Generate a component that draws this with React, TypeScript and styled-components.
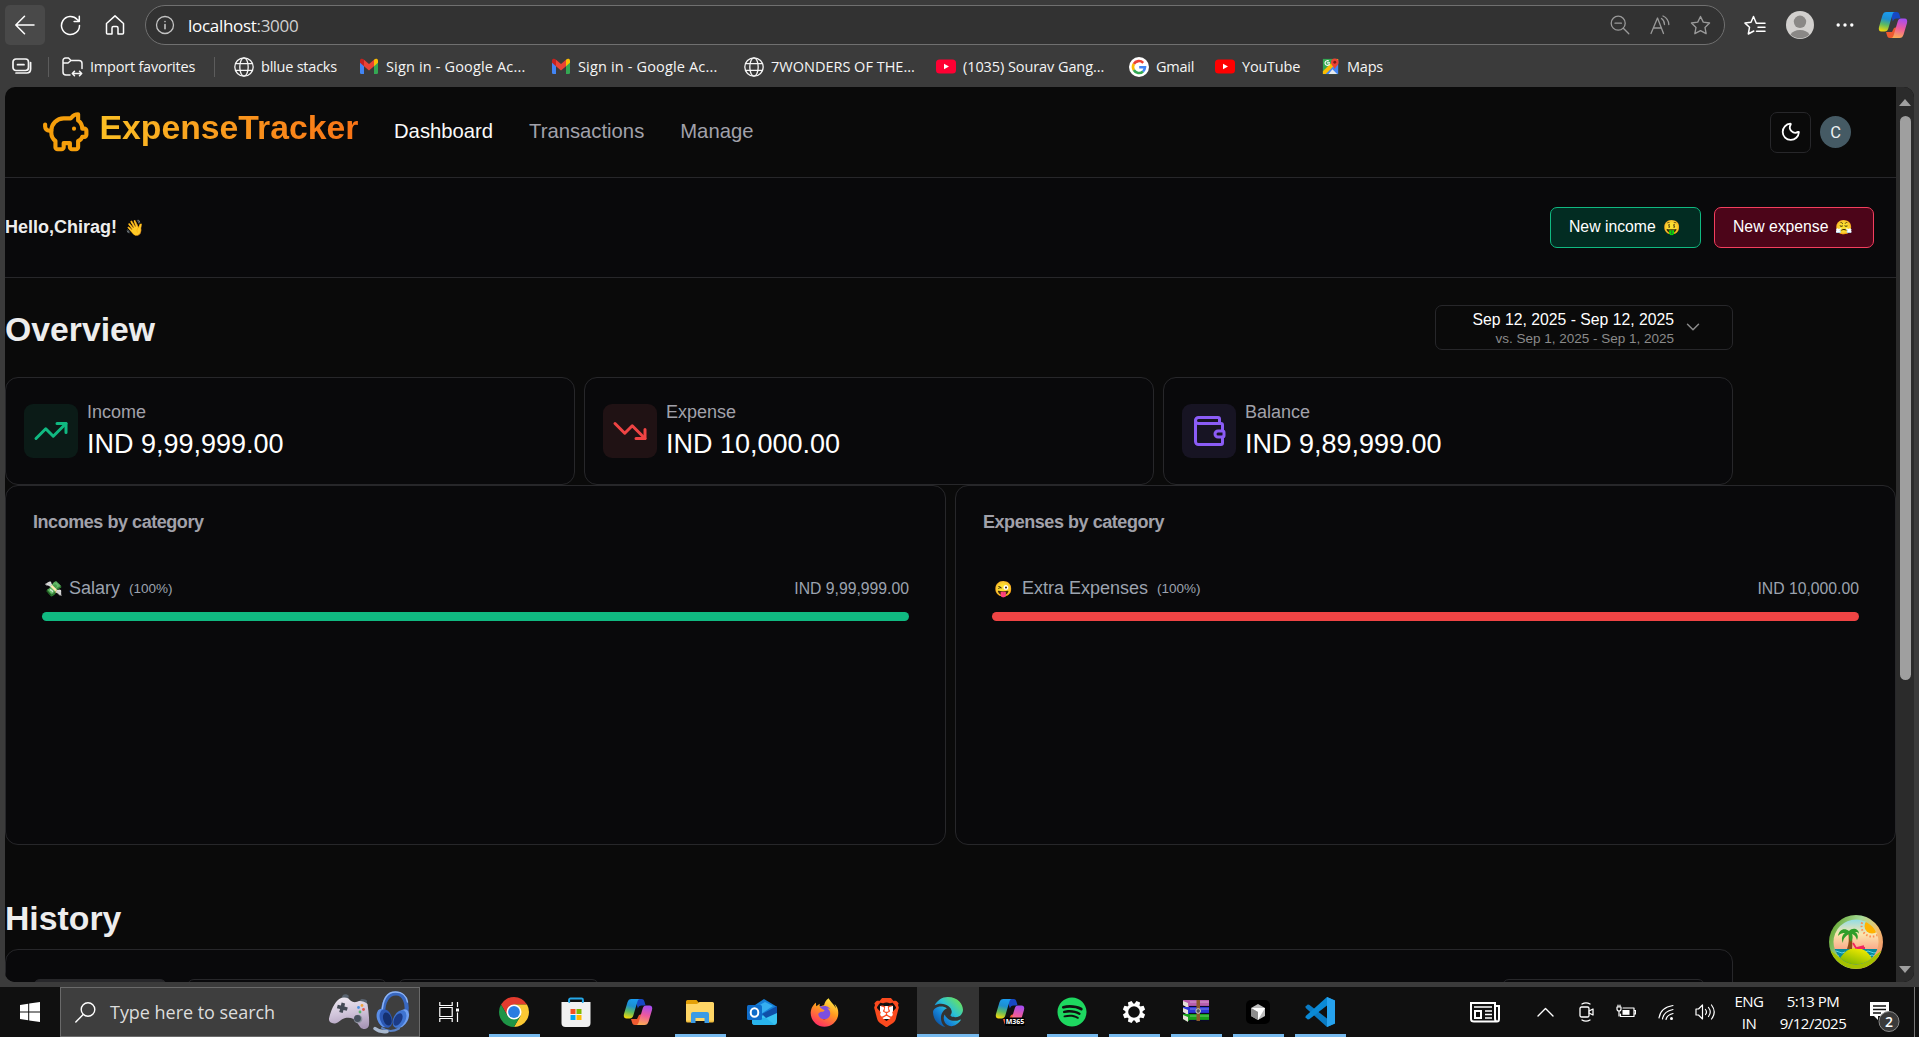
import React from "react";
import styled, { createGlobalStyle, css } from "styled-components";
import { ChevronDown, Moon, PiggyBank, TrendingDown, TrendingUp, Wallet } from "lucide-react";
import { FaBrave, FaEdge, FaFirefoxBrowser, FaSpotify } from "react-icons/fa6";

const GlobalStyle = createGlobalStyle`
  * { box-sizing: border-box; }
  body { margin: 0; background: #3b3b3b; overflow: hidden; }
  svg { display: block; flex: none; }
`;

const uiFont = css`font-family: "Open Sans", "Noto Sans", sans-serif;`;

const Screen = styled.div`
  width: 1919px;
  height: 1037px;
  display: flex;
  flex-direction: column;
  background: #3b3b3b;
  overflow: hidden;
`;

/* ---------- browser chrome ---------- */

const Toolbar = styled.div`
  ${uiFont}
  height: 50px;
  flex: none;
  display: flex;
  align-items: center;
  padding-left: 5px;
  color: #fff;
`;

const BackButton = styled.div`
  width: 40px;
  height: 40px;
  flex: none;
  border-radius: 5px;
  background: #494949;
  display: grid;
  place-items: center;
`;

const ToolSlot = styled.div<{ $w: number }>`
  width: ${(p) => p.$w}px;
  height: 40px;
  flex: none;
  display: grid;
  place-items: center;
`;

const AddressBar = styled.div`
  width: 1580px;
  height: 40px;
  margin-left: 7px;
  flex: none;
  border: 1px solid #707070;
  border-radius: 20px;
  background: #323232;
  display: flex;
  align-items: center;
  padding: 0 3px 0 9px;
`;

const Url = styled.div`
  flex: 1;
  margin-left: 13px;
  font-size: 17px;
  letter-spacing: -0.3px;
  color: #fff;
  span { color: #d0d0d0; }
`;

const BookmarksBar = styled.div`
  ${uiFont}
  height: 37px;
  flex: none;
  display: flex;
  align-items: center;
  padding: 0 0 4px 12px;
  color: #f5f5f5;
  font-size: 14.5px;
`;

const Bookmark = styled.div<{ $w: number; $tracking?: number }>`
  width: ${(p) => p.$w}px;
  letter-spacing: ${(p) => p.$tracking ?? -0.22}px;
  flex: none;
  display: flex;
  align-items: center;
  gap: 7px;
  white-space: nowrap;
`;

const Divider = styled.div<{ $gap: number }>`
  width: 1px;
  height: 20px;
  background: #5c5c5c;
  margin-right: ${(p) => p.$gap}px;
`;

/* ---------- page ---------- */

const Viewport = styled.div`
  width: 1909px;
  height: 895px;
  flex: none;
  margin-left: 5px;
  display: flex;
  border-radius: 10px;
  overflow: hidden;
  background: #0a0a0a;
  font-family: "Liberation Sans", Arial, sans-serif;
`;

const Page = styled.main`
  width: 1891px;
  height: 895px;
  overflow: hidden;
  position: relative;
  color: #ededed;
`;

const ScrollTrack = styled.div`
  width: 18px;
  background: #2b2b2b;
  display: flex;
  flex-direction: column;
  align-items: center;
  padding-top: 12px;
`;

const ScrollThumb = styled.div`
  width: 11px;
  height: 564px;
  margin: 10px 0 286px;
  border-radius: 6px;
  background: #9f9f9f;
`;

const ScrollArrow = styled.div<{ $down?: boolean }>`
  border: 6.5px solid transparent;
  border-top-width: ${(p) => (p.$down ? 7 : 0)}px;
  border-bottom-width: ${(p) => (p.$down ? 0 : 7)}px;
  border-top-color: ${(p) => (p.$down ? "#9f9f9f" : "transparent")};
  border-bottom-color: ${(p) => (p.$down ? "transparent" : "#9f9f9f")};
`;

const Header = styled.header`
  height: 91px;
  border-bottom: 1px solid #27272a;
  display: flex;
  align-items: center;
  padding: 0 45px 0 36px;
`;

const Logo = styled.div`
  width: 353px;
  display: flex;
  align-items: center;
  gap: 9px;
  color: #f59e0b;
  padding-top: 2px;
`;

const Brand = styled.span`
  font-size: 33.75px;
  line-height: 1.2;
  font-weight: 700;
  margin-bottom: 11px;
  background: linear-gradient(90deg, #fbbf24, #f97316);
  -webkit-background-clip: text;
  background-clip: text;
  color: transparent;
`;

const Nav = styled.nav`
  flex: 1;
  display: flex;
  gap: 36px;
  padding-bottom: 2px;
  font-size: 20.25px;
`;

const NavLink = styled.a<{ $active?: boolean }>`
  color: ${(p) => (p.$active ? "#fafafa" : "#a1a1aa")};
`;

const IconButton = styled.button`
  width: 41px;
  height: 41px;
  padding: 0;
  border: 1px solid #27272a;
  border-radius: 7px;
  background: #0a0a0a;
  color: #fff;
  display: grid;
  place-items: center;
`;

const Avatar = styled.div`
  width: 31px;
  height: 32px;
  margin-left: 9px;
  border-radius: 50%;
  background: #455a64;
  color: #eceff1;
  font: 16.5px Roboto, sans-serif;
  display: grid;
  place-items: center;
`;

const Greeting = styled.section`
  height: 100px;
  border-bottom: 1px solid #27272a;
  background: #09090b;
  display: flex;
  align-items: center;
  justify-content: space-between;
  padding-right: 22px;
`;

const Hello = styled.p`
  margin: 0;
  font-size: 18px;
  font-weight: 700;
  display: flex;
  align-items: center;
  gap: 8px;
  span { font-size: 15.5px; }
`;

const Actions = styled.div`
  display: flex;
  gap: 13px;
`;

const ActionButton = styled.button<{ $w: number; $border: string; $bg: string }>`
  width: ${(p) => p.$w}px;
  height: 41px;
  padding: 0 0 2px 18px;
  border: 1px solid ${(p) => p.$border};
  border-radius: 7px;
  background: ${(p) => p.$bg};
  color: #fff;
  font: 15.75px "Liberation Sans", Arial, sans-serif;
  display: flex;
  align-items: center;
  gap: 7px;
  span { font-size: 14px; }
`;

const SectionHead = styled.div`
  width: 1728px;
  height: 99px;
  padding-top: 3px;
  display: flex;
  align-items: center;
  justify-content: space-between;
`;

const Title = styled.h2`
  margin: 0;
  font-size: 33.75px;
  line-height: 40px;
  font-weight: 700;
`;

const DatePicker = styled.div`
  width: 298px;
  height: 45px;
  margin-bottom: 4px;
  border: 1px solid #27272a;
  border-radius: 7px;
  display: flex;
  align-items: center;
  justify-content: flex-end;
  gap: 8px;
  padding-right: 28px;
  color: #8b8b8b;
`;

const DateLines = styled.div`
  display: flex;
  flex-direction: column;
  align-items: flex-end;
  padding-top: 4px;
  font-size: 13.5px;
  line-height: 18px;
  strong {
    font-weight: 400;
    font-size: 15.75px;
    line-height: 20px;
    color: #fff;
  }
`;

const StatGrid = styled.div`
  width: 1728px;
  display: grid;
  grid-template-columns: repeat(3, 1fr);
  gap: 9px;
`;

const Panel = styled.div`
  border: 1px solid #27272a;
  border-radius: 13px;
  background: #09090b;
`;

const StatCard = styled(Panel)`
  height: 108px;
  padding-left: 18px;
  display: flex;
  align-items: center;
  gap: 9px;
`;

const StatIcon = styled.div<{ $color: string; $bg: string }>`
  width: 54px;
  height: 54px;
  border-radius: 9px;
  display: grid;
  place-items: center;
  color: ${(p) => p.$color};
  background: ${(p) => p.$bg};
`;

const StatText = styled.div`
  color: #a1a1aa;
  font-size: 18px;
  line-height: 27px;
  padding-bottom: 2px;
  strong {
    display: block;
    font-weight: 400;
    font-size: 27px;
    line-height: 36px;
    color: #fff;
  }
`;

const CategoryGrid = styled.div`
  display: grid;
  grid-template-columns: 1fr 1fr;
  gap: 9px;
`;

const CategoryCard = styled(Panel)`
  height: 360px;
  padding: 27px 36px 0 27px;
`;

const CategoryTitle = styled.h3`
  margin: 0;
  font-size: 18px;
  line-height: 18px;
  font-weight: 700;
  letter-spacing: -0.45px;
  color: #a1a1aa;
`;

const CategoryRow = styled.div`
  margin: 44px 0 0 9px;
  height: 27px;
  display: flex;
  align-items: center;
  color: #9ca3af;
  font-size: 18px;
  small { font-size: 13.5px; margin-left: 9px; }
`;

const RowEmoji = styled.span<{ $w: number }>`
  width: ${(p) => p.$w}px;
  flex: none;
  padding-left: 2px;
  font-size: 15px;
`;

const Amount = styled.span`
  margin-left: auto;
  font-size: 15.75px;
`;

const Bar = styled.div<{ $color: string }>`
  height: 9px;
  margin: 10px 0 0 9px;
  border-radius: 5px;
  background: ${(p) => p.$color};
`;

const HistoryTitle = styled(Title)`
  margin-top: 53px;
`;

const HistoryCard = styled(Panel)`
  width: 1728px;
  height: 200px;
  margin-top: 11px;
  padding: 29px 27px 0;
  display: flex;
`;

const HistoryControl = styled.div<{ $w: number; $ml: number; $filled?: boolean }>`
  width: ${(p) => p.$w}px;
  height: 40px;
  flex: none;
  margin-left: ${(p) => p.$ml}px;
  border: 1px solid #27272a;
  border-radius: 7px;
  background: ${(p) => (p.$filled ? "#27272a" : "transparent")};
`;

const DevBadge = styled.div`
  position: absolute;
  right: 13px;
  bottom: 13px;
`;

/* ---------- taskbar ---------- */

const Taskbar = styled.footer`
  ${uiFont}
  height: 50px;
  margin-top: 5px;
  flex: none;
  display: flex;
  background: #101010;
  color: #fff;
`;

const StartButton = styled.div`
  width: 60px;
  display: grid;
  place-items: center;
`;

const SearchBox = styled.div`
  width: 360px;
  border: 1px solid #6a6a6a;
  background: #3e3e3e;
  display: flex;
  align-items: center;
  gap: 3px;
  padding: 0 8px 0 14px;
  color: #dcdcdc;
  font-size: 18px;
  letter-spacing: -0.03px;
`;

const SearchLabel = styled.span`
  flex: 1;
  margin-left: 11px;
  white-space: nowrap;
`;

const TaskView = styled.div`
  width: 63px;
  padding-right: 5px;
  display: grid;
  place-items: center;
`;

const AppSlot = styled.div<{ $open?: boolean; $active?: boolean }>`
  width: 62px;
  display: grid;
  grid-template-rows: 47px 3px;
  place-items: center;
  background: ${(p) => (p.$active ? "#333" : "transparent")};
  > * { margin-top: 3px; }
  &::after {
    content: "";
    width: ${(p) => (p.$active ? 62 : 51)}px;
    height: 3px;
    background: ${(p) => (p.$open ? "#76b9ed" : "transparent")};
  }
`;

const BrandStack = styled.div<{ $core: string; $inset: string }>`
  display: grid;
  place-items: center;
  background: ${(p) => p.$core} no-repeat;
  background-clip: content-box;
  padding: ${(p) => p.$inset};
  > svg { margin: -8px; }
`;

const Tray = styled.div`
  margin-left: auto;
  display: flex;
  align-items: center;
`;

const TrayLines = styled.div<{ $w: number }>`
  width: ${(p) => p.$w}px;
  text-align: center;
  font-size: 15px;
  line-height: 22px;
  letter-spacing: -0.5px;
  white-space: nowrap;
`;

const Notifications = styled.div`
  width: 61px;
  height: 50px;
  padding: 13px 0 0 15px;
  border-right: 1px solid #777;
  margin-right: 4px;
`;

/* ---------- drawings ---------- */

const line = { fill: "none", stroke: "currentColor", strokeLinecap: "round", strokeLinejoin: "round" } as const;

const Globe = () => (
  <svg width="20" height="20" viewBox="0 0 20 20" {...line} strokeWidth="1.3">
    <circle cx="10" cy="10" r="9.2" />
    <ellipse cx="10" cy="10" rx="4.2" ry="9.2" />
    <path d="M1.6 6.7h16.8M1.6 13.3h16.8" />
  </svg>
);

const GmailIcon = () => (
  <svg width="20" height="17" viewBox="0 0 20 15" preserveAspectRatio="none">
    <path d="M1 2.2V13a1.2 1.2 0 0 0 1.2 1.2H5V6z" fill="#4285f4" />
    <path d="M15 6v8.2h2.8A1.2 1.2 0 0 0 19 13V2.2z" fill="#34a853" />
    <path d="M5 1.5v5.8l5 3.8 5-3.8V1.5l-5 3.9z" fill="#ea4335" />
    <path d="M1 2.5V4.3l4 3V1.5C3.5.3 1 .5 1 2.500z" fill="#c5221f" />
    <path d="M19 2.500V4.300l-4 3V1.500C16.500.3 19 .5 19 2.500z" fill="#fbbc04" />
  </svg>
);

const YouTubeIcon = ({ color }: { color: string }) => (
  <svg width="20" height="15" viewBox="0 0 20 15">
    <rect y=".5" width="20" height="14" rx="3.5" fill={color} />
    <path d="M8 4.700v5.600l5-2.800z" fill="#fff" />
  </svg>
);

const GoogleIcon = () => (
  <svg width="20" height="20" viewBox="0 0 20 20" fill="none" strokeWidth="2.6">
    <circle cx="10" cy="10" r="10" fill="#fff" />
    <path d="M14.200 5.800A6 6 0 0 0 4.800 7" stroke="#ea4335" />
    <path d="M4.800 7a6 6 0 0 0 0 6" stroke="#fbbc05" />
    <path d="M4.800 13a6 6 0 0 0 9.200 1.500" stroke="#34a853" />
    <path d="M14 14.500A6 6 0 0 0 16 10.300h-5.800" stroke="#4285f4" />
  </svg>
);

const MapsIcon = () => (
  <svg width="19" height="19" viewBox="0 0 20 20">
    <path d="M2 2h16v16H2z" fill="#34a853" />
    <path d="M2 18L18 2v16z" fill="#4285f4" />
    <path d="M2 15L15 2h3v3L5 18H2z" fill="#fbbc04" />
    <path d="M8 18l4-5 5 5z" fill="#e8eaed" />
    <path d="M14.500 13c-.5-3-4-4-4-7.500a4 4 0 0 1 8 0c0 3.500-3.500 4.500-4 7.500z" fill="#ea4335" />
    <circle cx="14.500" cy="5.500" r="1.500" fill="#7b1a12" />
    <path d="M9.500 6.200H6.200M9 7.500a2.500 2.500 0 1 1-.8-3.200" fill="none" stroke="#fff" strokeWidth="1.200" />
  </svg>
);

const Copilot = ({ id, label }: { id: string; label?: boolean }) => (
  <svg width="30" height="30" viewBox="0 0 30 30">
    <defs>
      <linearGradient id={id + "a"} x1=".5" y1="0" x2=".3" y2="1">
        <stop offset="0" stopColor="#1a9cf0" />
        <stop offset=".35" stopColor="#1e8fd0" />
        <stop offset=".65" stopColor="#5cba62" />
        <stop offset="1" stopColor="#f5d90a" />
      </linearGradient>
      <linearGradient id={id + "b"} x1=".6" y1="0" x2=".4" y2="1">
        <stop offset="0" stopColor="#a64cf0" />
        <stop offset=".5" stopColor="#ee5a9c" />
        <stop offset="1" stopColor="#fbac55" />
      </linearGradient>
    </defs>
    <path d="M12 2h6.500c2 0 2.600 1 3.100 3l1 3.500h-4.100c-2 0-3 1-3.600 3z" fill="#1748c4" />
    <path d="M8 22h6l2-4 3-1-3 11h-4c-2 0-2.600-1-3.100-3z" fill="#ee5a30" />
    <path d="M8.500 2H17c-1.500 0-2.200 1.300-2.700 3l-4 13.500c-.6 2-1.600 3-3.600 3H3.500C1 21.500.4 19.500 1 17L4.400 5.500C5.200 3 6.300 2 8.500 2z" fill={`url(#${id}a)`} />
    <path d="M21.500 28H13c1.500 0 2.200-1.300 2.700-3l4-13.500c.6-2 1.600-3 3.600-3h3.200c2.500 0 3.100 2 2.500 4.500l-3.400 11.500c-.8 2.500-1.900 3.500-4.100 3.500z" fill={`url(#${id}b)`} />
    {label && <rect x="10" y="20.500" width="20" height="8.500" rx="1" fill="#000" />}
    {label && <text x="20" y="27.300" textAnchor="middle" fontFamily="Open Sans" fontWeight="700" fontSize="7" fill="#fff">M365</text>}
  </svg>
);

const Gamepad = () => (
  <svg width="42" height="38" viewBox="0 0 42 38">
    <defs>
      <linearGradient id="pad" x1=".4" y1="0" x2=".6" y2="1">
        <stop offset="0" stopColor="#ece6f0" />
        <stop offset=".5" stopColor="#cfc3d9" />
        <stop offset="1" stopColor="#a896b6" />
      </linearGradient>
    </defs>
    <path d="M13 5.500l2-3.500c1.500-1.200 5-.6 5.800 1L20 6zM30 9l3-2.800c2-.6 5 .2 6 1.600L39 12z" fill="#5a6470" />
    <path d="M12 5.500c3-1.500 6-1 8.500 0 1.500 2 3 3 5 3.500s4-.5 6-1c3 0 6 1 8 3 1 7 2 15 1.500 21-.5 4.500-6 5-8.500 2.500-2.500-3-4-7-7-8.500-3-1.500-6-1.200-9-.8-3.500 1-5.500 4.300-8.500 5-4.500.8-7.500-1.200-7-4.700C2.500 19 6 9 12 5.500z" fill="url(#pad)" />
    <path d="M13.600 9.500l3.500 1-.7 3 3.400.9-1 3.400-3.300-.9-.8 3.200-3.500-1 .9-3.100-3.200-.8.900-3.400 3.100.8z" fill="#434a55" />
    <circle cx="30" cy="26" r="4.300" fill="#8e93a0" />
    <circle cx="29.500" cy="25.500" r="3.400" fill="#48505d" />
    <circle cx="34" cy="12.500" r="1.400" fill="#f2a33c" />
    <circle cx="35.500" cy="16.500" r="1.400" fill="#e0574f" />
    <circle cx="32" cy="19" r="1.400" fill="#58b368" />
    <circle cx="30.500" cy="14.500" r="1.400" fill="#4a90e2" />
  </svg>
);

const Headphones = () => (
  <svg width="38" height="44" viewBox="0 0 38 44" fill="none" strokeLinecap="round">
    <path d="M10 24C10 11 15 3.500 23 3.500S36 13 32.500 26" stroke="#3968c0" strokeWidth="4.200" />
    <path d="M9 23C9.500 10 14 2 22.500 2 29 2 33.500 6 34.500 12" stroke="#8db4f5" strokeWidth="1.500" />
    <ellipse cx="10" cy="28" rx="6" ry="9.500" transform="rotate(-18 10 28)" fill="#5b8fe8" />
    <ellipse cx="13" cy="28.500" rx="6" ry="9.500" transform="rotate(-18 13 28.500)" fill="#2c58b4" />
    <ellipse cx="14.300" cy="29" rx="4" ry="6.800" transform="rotate(-18 14.300 29)" fill="#15306f" />
    <ellipse cx="29" cy="28.500" rx="6" ry="10" transform="rotate(28 29 28.500)" fill="#6f9ff0" />
    <ellipse cx="26.500" cy="29" rx="6" ry="9.500" transform="rotate(28 26.500 29)" fill="#3f74d1" />
    <ellipse cx="25" cy="29.500" rx="3.800" ry="6.800" transform="rotate(28 25 29.500)" fill="#1c3b86" />
    <path d="M9 38c5 3.500 11 3.800 17 .5" stroke="#5b83c8" strokeWidth="2" />
    <path d="M2 38.500c3.500 3 8 3.500 12 3" stroke="#a9b9cf" strokeWidth="3.400" />
  </svg>
);

const ChromeIcon = () => (
  <svg width="30" height="30" viewBox="0 0 30 30">
    <path d="M2.010 7.500A15 15 0 0 1 27.990 7.500H15L8.500 18.750z" fill="#e33b2e" />
    <path d="M27.990 7.500A15 15 0 0 1 15 30L21.500 18.750 15 7.500z" fill="#fcc934" />
    <path d="M15 30A15 15 0 0 1 2.010 7.500L8.500 18.750H21.500z" fill="#1e9446" />
    <circle cx="15" cy="15" r="7.500" fill="#fff" />
    <circle cx="15" cy="15" r="5.900" fill="#2a7de1" />
  </svg>
);

const StoreIcon = () => (
  <svg width="30" height="30" viewBox="0 0 30 30">
    <path d="M8 7V3a1.500 1.500 0 0 1 1.500-1.500h11A1.500 1.500 0 0 1 22 3v4" fill="none" stroke="#25a8e8" strokeWidth="1.800" />
    <path d="M.5 5h29v21a4 4 0 0 1-4 4h-21a4 4 0 0 1-4-4z" fill="#f1f1f1" />
    <path d="M7.500 3.500v2.500h1.600V3.500zM20.900 3.500v2.500h1.600V3.500z" fill="#25a8e8" />
    <path d="M9.500 12h5v5h-5z" fill="#f25022" />
    <path d="M15.500 12h5v5h-5z" fill="#7fba00" />
    <path d="M9.500 18h5v5h-5z" fill="#00a4ef" />
    <path d="M15.500 18h5v5h-5z" fill="#ffb900" />
  </svg>
);

const ExplorerIcon = () => (
  <svg width="28" height="26" viewBox="0 0 28 26">
    <path d="M0 2.500A1.500 1.500 0 0 1 1.500 1h9l3 3.500H28V12H0z" fill="#e3a008" />
    <path d="M0 5h11l2.500-2H26.500A1.500 1.500 0 0 1 28 4.500V22H0z" fill="#ffd666" />
    <path d="M5 24V15a2 2 0 0 1 2-2h14a2 2 0 0 1 2 2v9h-4.500v-5h-9v5z" fill="#3b9be6" />
    <path d="M0 21.500h5v2H1.500A1.500 1.500 0 0 1 0 22zM23 21.500h5v.5a1.500 1.500 0 0 1-1.500 1.500H23z" fill="#f3bf3f" />
  </svg>
);

const OutlookIcon = () => (
  <svg width="30" height="28" viewBox="0 0 30 28">
    <path d="M5 9L17 1l12.500 7.500V14L10 22 5 18z" fill="#1680d8" />
    <path d="M8 10L18 4l8 4-12 8z" fill="#35aef0" />
    <path d="M30 9v15a3 3 0 0 1-3 3H8a3 3 0 0 1-3-3z" fill="#39c3f2" />
    <path d="M15 16L30 8v7l-11 5z" fill="#0f4fa8" />
    <path d="M5 20l14 0 9 7H8a3 3 0 0 1-3-3z" fill="#28b4ec" />
    <rect y="7" width="15" height="15" rx="1.500" fill="#0f6cc9" />
    <ellipse cx="7.500" cy="14.500" rx="3.800" ry="4.300" fill="none" stroke="#fff" strokeWidth="2" />
  </svg>
);

const Gradients = () => (
  <svg width="0" height="0">
    <defs>
      <linearGradient id="edge" x1="1" y1=".2" x2=".2" y2="1">
        <stop offset="0" stopColor="#6be25a" />
        <stop offset=".4" stopColor="#2cc3d5" />
        <stop offset=".7" stopColor="#1583d8" />
        <stop offset="1" stopColor="#0c52a0" />
      </linearGradient>
      <linearGradient id="fox" x1=".8" y1="0" x2=".3" y2="1">
        <stop offset="0" stopColor="#fff04a" />
        <stop offset=".45" stopColor="#ff9a1f" />
        <stop offset="1" stopColor="#ff2a66" />
      </linearGradient>
    </defs>
  </svg>
);

const SettingsIcon = () => (
  <svg width="24" height="24" viewBox="-12 -12 24 24">
    <circle r="7.200" fill="none" stroke="#fff" strokeWidth="2.800" />
    {[0, 45, 90, 135, 180, 225, 270, 315].map((a) => (
      <path key={a} d="M-2-11.200h4l.6 3.400h-5.200z" fill="#fff" transform={`rotate(${a + 22.5})`} />
    ))}
  </svg>
);

const WinrarIcon = () => (
  <svg width="28" height="28" viewBox="0 0 28 28">
    {[["#b85fae", 2], ["#2b35d8", 9], ["#16a01a", 16]].map(([c, y]) => (
      <g key={c as string} transform={`translate(0 ${y})`}>
        <path d="M1 0h26v7H5L1 5z" fill={c as string} />
        <path d="M1 1l5 2v5L1 5z" fill="#e5e0d8" />
        <path d="M7 6.500h20" stroke="#0a0a2a" strokeWidth="1.200" />
        <path d="M8 2h19" stroke="#ffffff66" strokeWidth="1" />
      </g>
    ))}
    <path d="M14.500 2h3.500v21h-3.500z" fill="#8b5a2b" />
    <circle cx="16.200" cy="13" r="2.300" fill="#555" stroke="#ccc" />
  </svg>
);

const CursorIcon = () => (
  <svg width="26" height="26" viewBox="0 0 26 26">
    <rect x="1" y="1" width="24" height="24" rx="5" fill="#000" />
    <path d="M13 5l7 4v8l-7 4-7-4V9z" fill="#bdbdbd" />
    <path d="M6 9l14 0-7 12v-8z" fill="#fff" />
    <path d="M6 9l7 4v8l-7-4z" fill="#8d8d8d" />
  </svg>
);

const VsCodeIcon = () => (
  <svg width="30" height="30" viewBox="0 0 30 30">
    <path d="M22 0l8 3.500v23L22 30 1 11.200.2 9.800 2.800 7.600 4.200 7.700 22 21.500z" fill="#0a7bc4" />
    <path d="M22 0v8.500L4.200 22.300l-1.400.1L.2 20.200 1 18.800z" fill="#0a8ad6" />
    <path d="M22 0l8 3.500v23L22 30z" fill="#26a2ee" />
  </svg>
);

const NewsIcon = () => (
  <svg width="30" height="21" viewBox="0 0 30 21" fill="none" stroke="#fff">
    <path d="M1 1h24v15c0 2.500 1 3.500 2 3.500H4C2 19.500 1 18.500 1 17zM25 4h4v13c0 2-1 2.500-2 2.500" strokeWidth="2" />
    <path d="M4 5h18M15 9h7M15 12.500h7M15 16h7" strokeWidth="1.600" />
    <path d="M5 9h6v7H5z" strokeWidth="2" />
  </svg>
);

const IslandBadge = () => (
  <svg width="54" height="54" viewBox="0 0 54 54">
    <defs>
      <linearGradient id="ring" x1=".1" y1=".2" x2="1" y2=".6">
        <stop offset="0" stopColor="#6fae3f" />
        <stop offset=".4" stopColor="#a6dc9a" />
        <stop offset=".75" stopColor="#f2c36e" />
        <stop offset="1" stopColor="#f29a6e" />
      </linearGradient>
      <linearGradient id="sky" x1="0" y1="0" x2="0" y2="1">
        <stop offset="0" stopColor="#71d9f5" />
        <stop offset=".35" stopColor="#fbe6ae" />
        <stop offset=".7" stopColor="#fb9d83" />
      </linearGradient>
      <linearGradient id="hill" x1=".8" y1="0" x2=".2" y2="1">
        <stop offset="0" stopColor="#fff000" />
        <stop offset="1" stopColor="#5fa800" />
      </linearGradient>
      <clipPath id="disc"><circle cx="27" cy="27" r="22.500" /></clipPath>
    </defs>
    <circle cx="27" cy="27" r="27" fill="url(#ring)" />
    <path d="M1.500 35.500a27 27 0 0 0 51 0L40 45H14z" fill="#a5c200" />
    <g clipPath="url(#disc)">
      <rect width="54" height="54" fill="url(#sky)" />
      <circle cx="43" cy="11" r="7.500" fill="#ffb300" />
      <circle cx="43" cy="11" r="10.500" fill="none" stroke="#ff8a50" strokeWidth="2" strokeDasharray="1.500 2" />
      <rect y="34" width="54" height="20" fill="#078a9b" />
      <path d="M4 37q3-2 6 0t6 0M36 37q3-2 6 0t6 0M4 41q3-2 6 0M40 41q3-2 6 0" fill="none" stroke="#5fd3e8" />
      <path d="M8 49q7-16 19-16t19 16v5H8z" fill="url(#hill)" />
    </g>
    <path d="M18 34q3-8 1-17l3-1q2 10 1 18z" fill="#8a4b14" />
    <path d="M20 16c-5-4-10-1-11 5 3-3 5-3 7-3-3 2-4 6-2 10 0-5 3-7 6-9 0 3 0 6 2 8 2-3 2-6 1-8 3 1 4 3 5 6 2-4 0-7-2-8 2 0 3 0 4 2 0-5-6-7-10-3z" fill="#2f9e2a" />
    <path d="M24 28l3 5 8-2M28 33h8" fill="none" stroke="#f0245e" strokeWidth="1.800" />
  </svg>
);

/* ---------- composition ---------- */

const stats = [
  { label: "Income", value: "IND 9,99,999.00", icon: TrendingUp, color: "#10b981", bg: "#0b1b17" },
  { label: "Expense", value: "IND 10,000.00", icon: TrendingDown, color: "#ef4444", bg: "#201214" },
  { label: "Balance", value: "IND 9,89,999.00", icon: Wallet, color: "#8b5cf6", bg: "#171423" },
];

const categories = [
  { title: "Incomes by category", emoji: "💸", slot: 27, name: "Salary", amount: "IND 9,99,999.00", color: "#10b981" },
  { title: "Expenses by category", emoji: "😜", slot: 30, name: "Extra Expenses", amount: "IND 10,000.00", color: "#ef4444" },
];

const bookmarks = [
  { label: "bllue stacks", w: 125, icon: <Globe /> },
  { label: "Sign in - Google Ac...", w: 192, icon: <GmailIcon />, tracking: 0.16 },
  { label: "Sign in - Google Ac...", w: 193, icon: <GmailIcon />, tracking: 0.16 },
  { label: "7WONDERS OF THE...", w: 192, icon: <Globe />, tracking: 0 },
  { label: "(1035) Sourav Gang...", w: 193, icon: <YouTubeIcon color="#ff0033" />, tracking: -0.08 },
  { label: "Gmail", w: 86, icon: <GoogleIcon /> },
  { label: "YouTube", w: 106, icon: <YouTubeIcon color="#ff0000" /> },
  { label: "Maps", w: 80, icon: <MapsIcon /> },
];

const apps = [
  { icon: <ChromeIcon />, open: true },
  { icon: <StoreIcon /> },
  { icon: <Copilot id="cpt" /> },
  { icon: <ExplorerIcon />, open: true },
  { icon: <OutlookIcon /> },
  { icon: <BrandStack $core="radial-gradient(circle at 50% 48%, #7b4fe0 55%, transparent 58%)" $inset="7px"><FaFirefoxBrowser size={29} fill="url(#fox)" /></BrandStack> },
  { icon: <BrandStack $core="linear-gradient(#fff, #fff)" $inset="7px 9px"><FaBrave size={29} color="#fb4a1e" /></BrandStack> },
  { icon: <FaEdge size={30} fill="url(#edge)" />, open: true, active: true },
  { icon: <Copilot id="m365" label /> },
  { icon: <FaSpotify size={30} color="#1ed760" />, open: true },
  { icon: <SettingsIcon />, open: true },
  { icon: <WinrarIcon />, open: true },
  { icon: <CursorIcon />, open: true },
  { icon: <VsCodeIcon />, open: true },
];

function BrowserChrome() {
  return (
    <>
      <Toolbar>
        <BackButton>
          <svg width="20" height="20" viewBox="0 0 20 20" {...line} strokeWidth="1.500"><path d="M19 10H1M9.500 1.200L.8 10l8.700 8.800" /></svg>
        </BackButton>
        <ToolSlot $w={50}>
          <svg width="21" height="21" viewBox="0 0 21 21" {...line} strokeWidth="1.500"><path d="M19.500 10.500A9 9 0 1 1 17.200 4.500L19.200 6.300M19.300 1.200v5.200h-5.200" /></svg>
        </ToolSlot>
        <ToolSlot $w={40}>
          <svg width="20" height="20" viewBox="0 0 20 20" {...line} strokeWidth="1.500"><path d="M1.500 8.500L10 .9l8.500 7.600V18a1 1 0 0 1-1 1H13v-6a1.500 1.500 0 0 0-1.500-1.500h-3A1.500 1.500 0 0 0 7 13v6H2.500a1 1 0 0 1-1-1z" /></svg>
        </ToolSlot>
        <ToolSlot $w={3} />
        <AddressBar>
          <svg width="20" height="20" viewBox="0 0 20 20" {...line} color="#c4c4c4" strokeWidth="1.300"><circle cx="10" cy="10" r="8.500" /><path d="M10 9.500v4.200M10 6.500v.1" strokeWidth="1.600" /></svg>
          <Url>localhost<span>:3000</span></Url>
          <ToolSlot $w={40}>
            <svg width="20" height="20" viewBox="0 0 20 20" {...line} color="#9a9a9a" strokeWidth="1.300"><circle cx="8.200" cy="8.200" r="7" /><path d="M5 8.200h6.400M13.300 13.300l5.500 5.500" /></svg>
          </ToolSlot>
          <ToolSlot $w={40}>
            <svg width="20" height="20" viewBox="0 0 20 20" {...line} color="#9a9a9a" strokeWidth="1.300"><path d="M1 18.500L7.500 3 13.500 18.500M3.300 13h8.200M11.500 3.500q3 2 3 6M13 1q5.500 2.500 5.800 8.500" /></svg>
          </ToolSlot>
          <ToolSlot $w={41}>
            <svg width="21" height="21" viewBox="0 0 22 22" {...line} color="#9a9a9a" strokeWidth="1.400"><path d="M11 1.500l2.900 6 6.600.9-4.800 4.600 1.200 6.600L11 16.400l-5.900 3.200L6.300 13 1.500 8.400l6.600-.9z" /></svg>
          </ToolSlot>
        </AddressBar>
        <ToolSlot $w={60}>
          <svg width="22" height="21" viewBox="0 0 22 21" {...line} strokeWidth="1.500"><path d="M13.500 8.200h-1.200L9.500 1.500 7 7.200l-6 .9 4.500 4.200L4.300 19l5.500-3M13 8.200h8M14 12.200h7M12.500 16.200H21" /></svg>
        </ToolSlot>
        <ToolSlot $w={30}>
          <svg width="28" height="28" viewBox="0 0 28 28"><circle cx="14" cy="14" r="14" fill="#d2d0ce" /><circle cx="14" cy="10.800" r="6.200" fill="#8a8886" /><path d="M4.500 23.500a10.500 8 0 0 1 19 0A14 14 0 0 1 4.500 23.500z" fill="#8a8886" /></svg>
        </ToolSlot>
        <ToolSlot $w={60}>
          <svg width="18" height="4" viewBox="0 0 18 4" fill="#fff"><circle cx="2.200" cy="2" r="1.700" /><circle cx="9" cy="2" r="1.700" /><circle cx="15.800" cy="2" r="1.700" /></svg>
        </ToolSlot>
        <ToolSlot $w={36}><Copilot id="cpb" /></ToolSlot>
      </Toolbar>
      <BookmarksBar>
        <Bookmark $w={36}>
          <svg width="20" height="17" viewBox="0 0 20 17" {...line} strokeWidth="1.700"><rect x="1" y="1" width="15.500" height="11.500" rx="3" /><path d="M5.500 6.700h6.500M18.600 4.500v6.500q0 4-4 4H4" /></svg>
        </Bookmark>
        <Divider $gap={13} />
        <Bookmark $w={152}>
          <svg width="21" height="20" viewBox="0 0 21 20" {...line} strokeWidth="1.500"><path d="M8 18H4a3 3 0 0 1-3-3V3.500A2.500 2.500 0 0 1 3.500 1h3L9 3.500h8a3 3 0 0 1 3 3v5M1 6h5L9 3.500M10.500 16.500h9M12.500 14.200l-2.200 2.300 2.200 2.300M17.500 14.200l2.200 2.300-2.200 2.300" /></svg>
          Import favorites
        </Bookmark>
        <Divider $gap={19} />
        {bookmarks.map((b, i) => <Bookmark key={i} $w={b.w} $tracking={b.tracking}>{b.icon}{b.label}</Bookmark>)}
      </BookmarksBar>
    </>
  );
}

function Dashboard() {
  return (
    <Page>
      <Header>
        <Logo>
          <PiggyBank size={49.5} strokeWidth={2} />
          <Brand>ExpenseTracker</Brand>
        </Logo>
        <Nav>
          <NavLink $active>Dashboard</NavLink>
          <NavLink>Transactions</NavLink>
          <NavLink>Manage</NavLink>
        </Nav>
        <IconButton><Moon size={21.6} /></IconButton>
        <Avatar>C</Avatar>
      </Header>
      <Greeting>
        <Hello>Hello,Chirag! <span>👋</span></Hello>
        <Actions>
          <ActionButton $w={151} $border="#10b981" $bg="#022c22">New income <span>🤑</span></ActionButton>
          <ActionButton $w={160} $border="#f43f5e" $bg="#4c0519">New expense <span>😤</span></ActionButton>
        </Actions>
      </Greeting>
      <SectionHead>
        <Title>Overview</Title>
        <DatePicker>
          <DateLines>
            <strong>Sep 12, 2025 - Sep 12, 2025</strong>
            <span>vs. Sep 1, 2025 - Sep 1, 2025</span>
          </DateLines>
          <ChevronDown size={22} strokeWidth={1.6} />
        </DatePicker>
      </SectionHead>
      <StatGrid>
        {stats.map(({ label, value, icon: Icon, color, bg }) => (
          <StatCard key={label}>
            <StatIcon $color={color} $bg={bg}><Icon size={36} /></StatIcon>
            <StatText>{label}<strong>{value}</strong></StatText>
          </StatCard>
        ))}
      </StatGrid>
      <CategoryGrid>
        {categories.map((c) => (
          <CategoryCard key={c.title}>
            <CategoryTitle>{c.title}</CategoryTitle>
            <CategoryRow>
              <RowEmoji $w={c.slot}>{c.emoji}</RowEmoji>
              {c.name}
              <small>(100%)</small>
              <Amount>{c.amount}</Amount>
            </CategoryRow>
            <Bar $color={c.color} />
          </CategoryCard>
        ))}
      </CategoryGrid>
      <HistoryTitle>History</HistoryTitle>
      <HistoryCard>
        <HistoryControl $w={134} $ml={0} $filled />
        <HistoryControl $w={200} $ml={20} />
        <HistoryControl $w={201} $ml={11} />
        <HistoryControl $w={203} $ml={903} />
      </HistoryCard>
      <DevBadge><IslandBadge /></DevBadge>
    </Page>
  );
}

function WindowsTaskbar() {
  return (
    <Taskbar>
      <StartButton>
        <svg width="20" height="20" viewBox="0 0 20 20" fill="#fff"><path d="M0 2.900L8.200 1.700V9.500H0zM9.200 1.500L20 0V9.500H9.200zM0 10.500H8.200V18.300L0 17.100zM9.200 10.500H20V20L9.200 18.500z" /></svg>
      </StartButton>
      <SearchBox>
        <svg width="21" height="21" viewBox="0 0 21 21" {...line} color="#fff" strokeWidth="1.400"><circle cx="13" cy="7.500" r="6.800" /><path d="M8.200 12.500L.8 20" /></svg>
        <SearchLabel>Type here to search</SearchLabel>
        <Gamepad />
        <Headphones />
      </SearchBox>
      <TaskView>
        <svg width="20" height="20" viewBox="0 0 20 20" fill="none" stroke="#fff" strokeWidth="1.200"><path d="M.8 0v3.500h12.400V0M.8 20v-3.500h12.400V20M.8 5.500h12.400v9H.8zM18.500 0v5M18.500 10.500V20" /><path d="M17 6.500h3v3h-3z" fill="#fff" stroke="none" /></svg>
      </TaskView>
      {apps.map((a, i) => <AppSlot key={i} $open={a.open} $active={a.active}>{a.icon}</AppSlot>)}
      <Tray>
        <ToolSlot $w={70}><NewsIcon /></ToolSlot>
        <ToolSlot $w={50}><svg width="17" height="10" viewBox="0 0 17 10" {...line} strokeWidth="1.400"><path d="M1 9l7.500-7.500L16 9" /></svg></ToolSlot>
        <ToolSlot $w={34}><svg width="16" height="20" viewBox="0 0 16 20" {...line} strokeWidth="1.300"><rect x="1" y="5" width="9" height="10" rx="1.500" /><path d="M10 9l4-2v6l-4-2M3 2q4-2.400 8 0M3 18q4 2.400 8 0" /></svg></ToolSlot>
        <ToolSlot $w={43}><svg width="20" height="16" viewBox="0 0 20 16" {...line} strokeWidth="1.200"><path d="M7 4h11v8.500H4.500V10M18.500 6.500h1v3.500h-1M1 3h4v2q0 2-2 2t-2-2zM2 1v2M4 1v2M3 7.500V12" /><path d="M6.500 6h7v4.800h-7z" fill="#fff" stroke="none" /></svg></ToolSlot>
        <ToolSlot $w={38}><svg width="16" height="17" viewBox="0 0 16 17" {...line} strokeWidth="1.200"><path d="M1 14Q2.500 3.500 15 1.500M4.500 15Q5.500 7.500 15 5.500M8 15.500Q9 11 15 9.500" /><circle cx="13.500" cy="14.500" r="1.500" fill="#fff" stroke="none" /></svg></ToolSlot>
        <ToolSlot $w={41}><svg width="21" height="18" viewBox="0 0 21 18" {...line} strokeWidth="1.200"><path d="M1 6h2.500L7.500 2v14l-4-4H1zM10.500 6.500q2 2.500 0 5M13.500 4.500q3.500 4.500 0 9M16.500 2q5.500 7 0 14" /></svg></ToolSlot>
        <TrayLines $w={46}>ENG<br />IN</TrayLines>
        <TrayLines $w={82}>5:13 PM<br />9/12/2025</TrayLines>
        <Notifications>
          <svg width="32" height="32" viewBox="0 0 32 32">
            <path d="M1 2h19v14H9v4l-4-4H1z" fill="#fff" />
            <path d="M4 6h13M4 9.500h13M4 13h8" stroke="#101010" strokeWidth="1.300" />
            <circle cx="20" cy="21.500" r="10" fill="#3a3a3a" stroke="#8a8a8a" />
            <text x="20" y="26.500" textAnchor="middle" fontFamily="Open Sans" fontWeight="600" fontSize="14" fill="#fff">2</text>
          </svg>
        </Notifications>
      </Tray>
    </Taskbar>
  );
}

export default function App() {
  return (
    <Screen>
      <GlobalStyle />
      <Gradients />
      <BrowserChrome />
      <Viewport>
        <Dashboard />
        <ScrollTrack>
          <ScrollArrow />
          <ScrollThumb />
          <ScrollArrow $down />
        </ScrollTrack>
      </Viewport>
      <WindowsTaskbar />
    </Screen>
  );
}
